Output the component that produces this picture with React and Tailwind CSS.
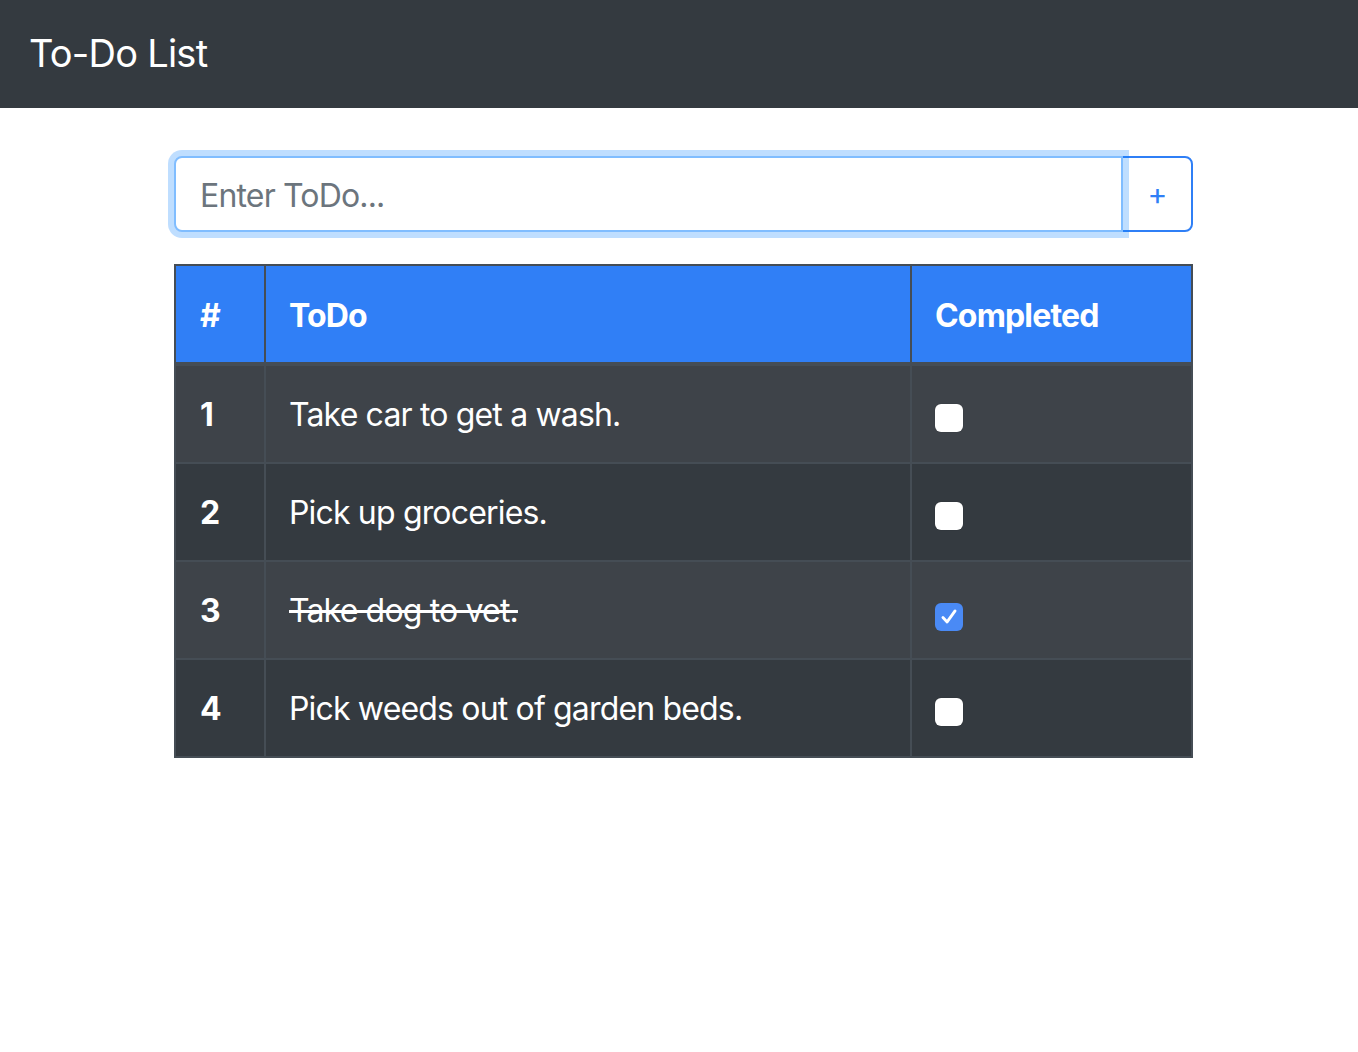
import React from "react";

const todos = [
  { id: 1, text: "Take car to get a wash.", done: false },
  { id: 2, text: "Pick up groceries.", done: false },
  { id: 3, text: "Take dog to vet.", done: true },
  { id: 4, text: "Pick weeds out of garden beds.", done: false },
];

function Check({ checked }) {
  if (checked) {
    return (
      <span className="inline-flex h-[28px] w-[28px] items-center justify-center rounded-[6px] bg-[#4a8af5] align-[-6px]">
        <svg width="22" height="22" viewBox="0 0 20 20" fill="none">
          <path d="M4.5 10.5 L8.3 14.5 L15.5 4.5" stroke="white" strokeWidth="2.6" strokeLinecap="round" strokeLinejoin="round" />
        </svg>
      </span>
    );
  }
  return (
    <span className="inline-block h-[28px] w-[28px] rounded-[6px] bg-white align-[-6px] shadow-[0_0_1px_rgba(0,0,0,0.4)]" />
  );
}

export default function App() {
  return (
    <div className="min-h-[1052px] bg-white font-['Inter','Liberation_Sans',sans-serif] text-[32px] leading-[48px] tracking-[-0.026em]">
      <nav className="flex h-[108px] items-center bg-[#343a40] px-[29px]">
        <span className="-mt-[3px] text-[38px] leading-[60px] tracking-[-0.02em] text-white">To-Do List</span>
      </nav>

      <div className="ml-[174px] mt-[48px] w-[1019px]">
        <div className="flex h-[76px]">
          <div className="relative z-10 flex flex-1 items-center rounded-l-[8px] border-2 border-[#80bdff] bg-white pl-[24px] pt-[3px] shadow-[0_0_0_6px_rgba(0,123,255,0.25)]">
            <span className="text-[#6c757d]">Enter ToDo...</span>
          </div>
          <div className="-ml-[2px] flex w-[72px] items-center justify-center rounded-r-[8px] border-2 border-[#2f7ff6] text-[#2f7ff6]">
            <span className="text-[30px]">+</span>
          </div>
        </div>

        <table className="mt-[32px] w-[1019px] table-fixed border-collapse border-2 border-[#454d55] text-white">
          <colgroup>
            <col className="w-[90px]" />
            <col className="w-[646px]" />
            <col />
          </colgroup>
          <thead>
            <tr className="bg-[#307ff6]">
              <th className="border-2 border-b-4 border-[#454d55] pl-[24px] pr-[24px] pt-[26px] pb-[22px] text-left font-bold">#</th>
              <th className="border-2 border-b-4 border-[#454d55] pl-[23px] pr-[24px] pt-[26px] pb-[22px] text-left font-bold">ToDo</th>
              <th className="border-2 border-b-4 border-[#454d55] pl-[23px] pr-[24px] pt-[26px] pb-[22px] text-left font-bold">Completed</th>
            </tr>
          </thead>
          <tbody>
            {todos.map((t, i) => (
              <tr key={t.id} className={i % 2 === 0 ? "bg-[#3e4349]" : "bg-[#343a40]"}>
                <th className="border-2 border-[#454d55] pl-[24px] pr-[24px] pt-[25px] pb-[23px] text-left font-bold">{t.id}</th>
                <td className={"border-2 border-[#454d55] pl-[23px] pr-[24px] pt-[25px] pb-[23px] " + (t.done ? "line-through" : "")}>{t.text}</td>
                <td className="border-2 border-[#454d55] pl-[23px] pr-[24px] pt-[25px] pb-[23px]">
                  <Check checked={t.done} />
                </td>
              </tr>
            ))}
          </tbody>
        </table>
      </div>
    </div>
  );
}
